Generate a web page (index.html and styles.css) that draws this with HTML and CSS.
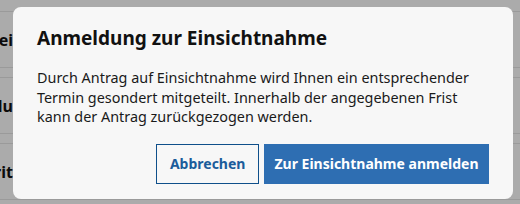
FILE: index.html
```html
<!DOCTYPE html>
<html lang="de">
<head>
    <meta charset="UTF-8">
    <meta name="viewport" content="width=device-width, initial-scale=1.0">
    <title>Einsichtnahme</title>
    <link rel="stylesheet" href="styles.css">
</head>
<body>
    <div class="seite">
        <div class="zeile"><span>Frei</span></div>
        <div class="zeile"><span>Schlu</span></div>
        <div class="zeile"><span>Schrit</span></div>
    </div>

    <div class="overlay">
        <div class="dialog">
            <h2>Anmeldung zur Einsichtnahme</h2>
            <p>
                Durch Antrag auf Einsichtnahme wird Ihnen ein entsprechender<br>
                Termin gesondert mitgeteilt. Innerhalb der angegebenen Frist<br>
                kann der Antrag zurückgezogen werden.
            </p>
            <div class="aktionen">
                <button class="btn btn-sekundaer">Abbrechen</button>
                <button class="btn btn-primaer">Zur Einsichtnahme anmelden</button>
            </div>
        </div>
    </div>
</body>
</html>
```

FILE: styles.css
```css
body{
    margin: 0;
    background-color: #ffffff;
    font-family: "Noto Sans", "Open Sans", sans-serif;
    height: 204px;
    overflow: hidden;
}

.seite{
    padding-top: 11px;
}

.zeile{
    height: 55px;
    border-top: 1px solid #e6e6e6;
    border-bottom: 1px solid #e6e6e6;
    margin-bottom: 9px;
    display: flex;
    align-items: center;
    font-weight: bold;
    font-size: 16px;
    color: #111;
    white-space: nowrap;
}

.zeile span{
    width: 13px;
    direction: rtl;
    overflow: hidden;
}

.overlay{
    position: fixed;
    inset: 0;
    background-color: rgba(0, 0, 0, 0.33);
}

.dialog{
    position: absolute;
    left: 13px;
    top: 7px;
    width: 500px;
    height: 192px;
    box-sizing: border-box;
    padding: 18px 24px 0 24px;
    background-color: #f7f7f7;
    border-radius: 8px;
}

.dialog h2{
    margin: 0;
    font-size: 19px;
    line-height: 26px;
    color: #111;
}

.dialog p{
    margin: 17px 0 0 0;
    font-size: 14.4px;
    line-height: 19.5px;
    white-space: nowrap;
    color: #1a1a1a;
}

.aktionen{
    display: flex;
    justify-content: flex-end;
    gap: 5px;
    margin-top: 17px;
}

.btn{
    font-family: inherit;
    font-size: 14px;
    font-weight: bold;
    height: 40px;
    border-radius: 0;
    cursor: pointer;
}

.btn-sekundaer{
    background-color: transparent;
    border: 1px solid #0f4f8a;
    color: #1b5c9b;
    padding: 0 12.5px;
}

.btn-primaer{
    background-color: #2e6eb2;
    border: 1px solid #2e6eb2;
    color: #ffffff;
    padding: 0 9.5px;
}
```
